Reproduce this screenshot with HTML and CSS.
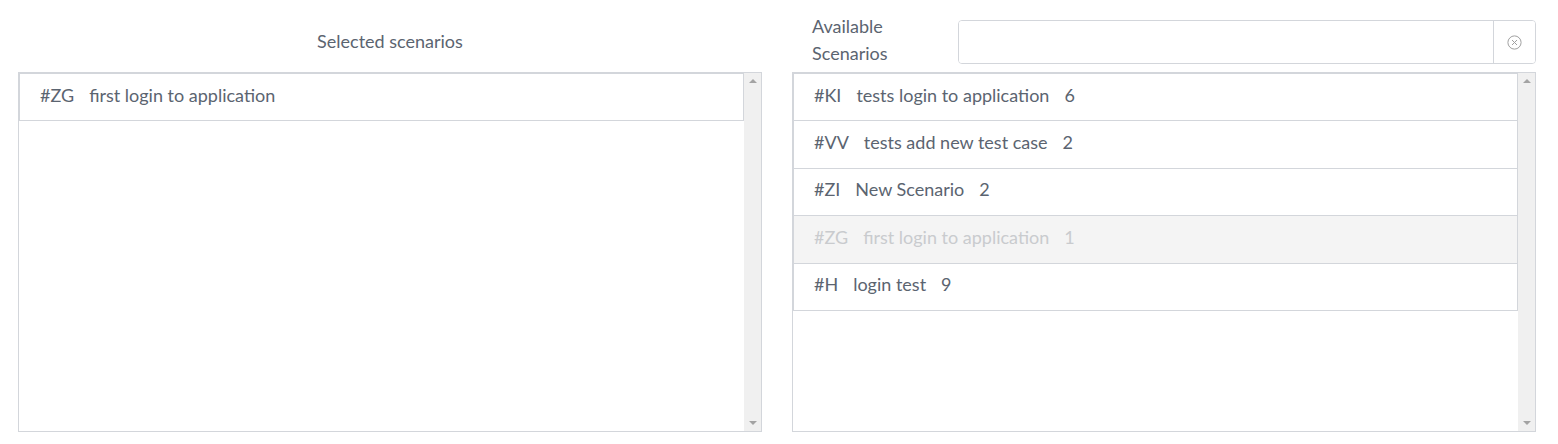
FILE: index.html
```html
<!DOCTYPE html>
<html lang="en">
<head>
    <meta charset="UTF-8">
    <title>Scenarios</title>
    <link rel="stylesheet" href="styles.css">
</head>
<body>
    <div class="picker">
        <div class="column">
            <div class="column-head">
                <h3 class="title">Selected scenarios</h3>
            </div>
            <div class="panel">
                <ul class="list">
                    <li class="item"><span class="code">#ZG</span><span class="name">first login to application</span></li>
                </ul>
                <div class="scrollbar"><span class="arrow up"></span><span class="arrow down"></span></div>
            </div>
        </div>

        <div class="column">
            <div class="column-head search-head">
                <label class="search-label" for="search">Available Scenarios</label>
                <div class="search">
                    <input type="text" id="search">
                    <button class="clear" type="button">
                        <svg width="15" height="15" viewBox="0 0 15 15">
                            <circle cx="7.5" cy="7.5" r="6.6" fill="none" stroke="#a0a0a0" stroke-width="1"/>
                            <path d="M5 5 L10 10 M10 5 L5 10" stroke="#a0a0a0" stroke-width="1"/>
                        </svg>
                    </button>
                </div>
            </div>
            <div class="panel">
                <ul class="list">
                    <li class="item"><span class="code">#KI</span><span class="name">tests login to application</span><span class="count">6</span></li>
                    <li class="item"><span class="code">#VV</span><span class="name">tests add new test case</span><span class="count">2</span></li>
                    <li class="item"><span class="code">#ZI</span><span class="name">New Scenario</span><span class="count">2</span></li>
                    <li class="item disabled"><span class="code">#ZG</span><span class="name">first login to application</span><span class="count">1</span></li>
                    <li class="item"><span class="code">#H</span><span class="name">login test</span><span class="count">9</span></li>
                </ul>
                <div class="scrollbar"><span class="arrow up"></span><span class="arrow down"></span></div>
            </div>
        </div>
    </div>
</body>
</html>
```

FILE: styles.css
```css
body {
    margin: 0;
    font-family: Lato, "Open Sans", Arial, sans-serif;
    font-size: 18px;
    color: #5b6470;
    background-color: white;
}
.picker {
    display: grid;
    grid-template-columns: 1fr 1fr;
    column-gap: 30px;
    padding: 20px 22px 0 18px;
}
.column-head {
    height: 44px;
    margin-bottom: 8px;
    display: flex;
    align-items: center;
    justify-content: center;
}
.title {
    margin: 0 0 2px;
    font-size: 18px;
    font-weight: normal;
}
.search-head {
    justify-content: flex-start;
}
.search-label {
    box-sizing: border-box;
    width: 166px;
    padding: 0 30px 0 20px;
    line-height: 27px;
    margin-top: -4px;
}
.search {
    flex: 1;
    display: flex;
    height: 44px;
    box-sizing: border-box;
    border: 1px solid #d3d6db;
    border-radius: 4px;
    overflow: hidden;
}
.search input {
    flex: 1;
    border: none;
    outline: none;
    padding: 0 12px;
    font: inherit;
}
.clear {
    width: 42px;
    border: none;
    border-left: 1px solid #d3d6db;
    background: white;
    padding: 0;
    display: flex;
    align-items: center;
    justify-content: center;
}
.panel {
    display: flex;
    height: 360px;
    box-sizing: border-box;
    border: 1px solid #d3d6db;
}
.list {
    flex: 1;
    list-style: none;
    margin: 0;
    padding: 0;
}
.item {
    display: flex;
    align-items: center;
    height: 48.4px;
    box-sizing: border-box;
    padding: 0 20px 5px;
    border: 1px solid #d3d6db;
    margin-bottom: -1px;
    line-height: 24px;
}
.code {
    margin-right: 15px;
}
.count {
    margin-left: 15px;
}
.item.disabled {
    background-color: #f4f4f4;
    color: #c9cbce;
}
.scrollbar {
    width: 17px;
    background-color: #f0f0f0;
    display: flex;
    flex-direction: column;
    justify-content: space-between;
    align-items: center;
    padding: 6px 0;
}
.arrow {
    width: 0;
    height: 0;
    border-left: 4px solid transparent;
    border-right: 4px solid transparent;
}
.arrow.up {
    border-bottom: 4px solid #a3a3a3;
}
.arrow.down {
    border-top: 4px solid #a3a3a3;
}
```
